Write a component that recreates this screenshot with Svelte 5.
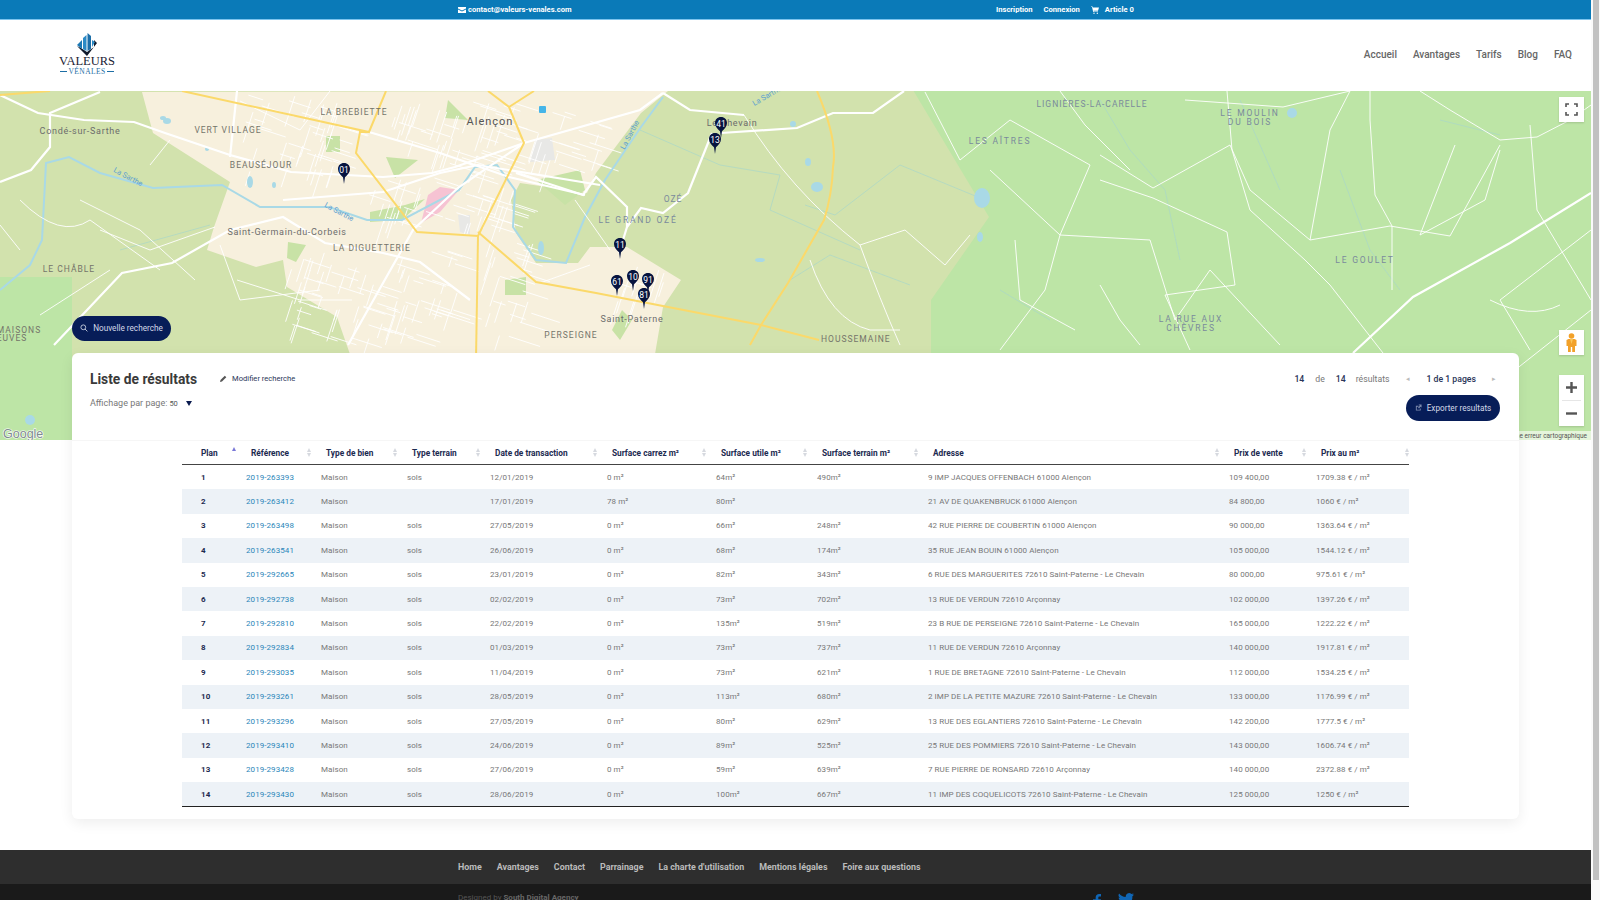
<script>
  const columns = [
    { label: 'Plan', width: 54, active: true },
    { label: 'Référence', width: 75 },
    { label: 'Type de bien', width: 86 },
    { label: 'Type terrain', width: 83 },
    { label: 'Date de transaction', width: 117 },
    { label: 'Surface carrez m²', width: 109 },
    { label: 'Surface utile m²', width: 101 },
    { label: 'Surface terrain m²', width: 111 },
    { label: 'Adresse', width: 301 },
    { label: 'Prix de vente', width: 87 },
    { label: 'Prix au m²', width: 103 }
  ];

  const rows = [
    ['1', '2019-263393', 'Maison', 'sols', '12/01/2019', '0 m²', '64m²', '490m²', '9 IMP JACQUES OFFENBACH 61000 Alençon', '109 400,00', '1709.38 € / m²'],
    ['2', '2019-263412', 'Maison', '', '17/01/2019', '78 m²', '80m²', '', '21 AV DE QUAKENBRUCK 61000 Alençon', '84 800,00', '1060 € / m²'],
    ['3', '2019-263498', 'Maison', 'sols', '27/05/2019', '0 m²', '66m²', '248m²', '42 RUE PIERRE DE COUBERTIN 61000 Alençon', '90 000,00', '1363.64 € / m²'],
    ['4', '2019-263541', 'Maison', 'sols', '26/06/2019', '0 m²', '68m²', '174m²', '35 RUE JEAN BOUIN 61000 Alençon', '105 000,00', '1544.12 € / m²'],
    ['5', '2019-292665', 'Maison', 'sols', '23/01/2019', '0 m²', '82m²', '343m²', '6 RUE DES MARGUERITES 72610 Saint-Paterne - Le Chevain', '80 000,00', '975.61 € / m²'],
    ['6', '2019-292738', 'Maison', 'sols', '02/02/2019', '0 m²', '73m²', '702m²', '13 RUE DE VERDUN 72610 Arçonnay', '102 000,00', '1397.26 € / m²'],
    ['7', '2019-292810', 'Maison', 'sols', '22/02/2019', '0 m²', '135m²', '519m²', '23 B RUE DE PERSEIGNE 72610 Saint-Paterne - Le Chevain', '165 000,00', '1222.22 € / m²'],
    ['8', '2019-292834', 'Maison', 'sols', '01/03/2019', '0 m²', '73m²', '737m²', '11 RUE DE VERDUN 72610 Arçonnay', '140 000,00', '1917.81 € / m²'],
    ['9', '2019-293035', 'Maison', 'sols', '11/04/2019', '0 m²', '73m²', '621m²', '1 RUE DE BRETAGNE 72610 Saint-Paterne - Le Chevain', '112 000,00', '1534.25 € / m²'],
    ['10', '2019-293261', 'Maison', 'sols', '28/05/2019', '0 m²', '113m²', '680m²', '2 IMP DE LA PETITE MAZURE 72610 Saint-Paterne - Le Chevain', '133 000,00', '1176.99 € / m²'],
    ['11', '2019-293296', 'Maison', 'sols', '27/05/2019', '0 m²', '80m²', '629m²', '13 RUE DES EGLANTIERS 72610 Saint-Paterne - Le Chevain', '142 200,00', '1777.5 € / m²'],
    ['12', '2019-293410', 'Maison', 'sols', '24/06/2019', '0 m²', '89m²', '525m²', '25 RUE DES POMMIERS 72610 Saint-Paterne - Le Chevain', '143 000,00', '1606.74 € / m²'],
    ['13', '2019-293428', 'Maison', 'sols', '27/06/2019', '0 m²', '59m²', '639m²', '7 RUE PIERRE DE RONSARD 72610 Arçonnay', '140 000,00', '2372.88 € / m²'],
    ['14', '2019-293430', 'Maison', 'sols', '28/06/2019', '0 m²', '100m²', '667m²', '11 IMP DES COQUELICOTS 72610 Saint-Paterne - Le Chevain', '125 000,00', '1250 € / m²']
  ];

  const navLinks = ['Accueil', 'Avantages', 'Tarifs', 'Blog', 'FAQ'];
  const footerLinks = ['Home', 'Avantages', 'Contact', 'Parrainage', "La charte d'utilisation", 'Mentions légales', 'Foire aux questions'];

  // map data is in page coordinates, the svg viewBox starts at y=91
  const yellowRoads = [
    'M182 91 L369 132 L386 91',
    'M0 95 L50 91',
    'M369 132 L360 132 L356 153 L417 232 L478 236 L524 143 L509 107 L488 91',
    'M509 107 L534 91',
    'M478 236 L476 360',
    'M478 232 L536 282 L596 293 L668 307 L761 325 L819 340',
    'M817 91 Q838 140 833 167 Q832 195 824 220 L788 283 L761 325 L750 345'
  ];

  const whiteRoads = [
    'M0 95 L38 113 L84 120 L134 122 L165 133 L230 155 L291 172 L383 177 L432 173 L455 167 L524 143',
    'M0 182 L31 170 L50 147 L50 113 L100 92',
    'M54 345 L122 273 L172 263 L230 230 L283 217 L325 243 L383 253 L420 262 L470 300',
    'M283 200 L383 192 L440 173 L478 165 L600 185',
    'M237 91 L230 157',
    'M348 345 L413 230 L459 187 L524 143 L640 110 L663 93',
    'M663 93 L690 110 L744 115 M721 133 L797 128 L833 113 L873 113 L904 91',
    'M712 133 L688 193 L663 213 L641 208 L627 227 L619 253',
    'M516 173 L583 195 L596 177 L627 207 L627 227',
    'M1591 193 L1510 243 L1413 297 L1353 353',
    'M369 132 L440 153 L509 177 L585 195'
  ];

  const thinRoads = [
    'M744 115 Q790 190 860 245 L905 230 L945 265 L970 235',
    'M860 245 Q880 300 900 345',
    'M925 92 L960 160 L1010 120 L1090 165 L1060 235 L1045 290 L1000 350',
    'M990 170 L1060 235 L1150 240 L1175 320 L1210 270 L1280 345',
    'M1227 91 L1232 150 L1250 210 L1305 260 L1330 285 L1383 353',
    'M1370 91 L1370 120 L1375 195 L1392 226 L1392 290',
    'M1100 155 L1153 188 L1230 145 L1250 190 L1310 240 L1390 226 L1450 236 L1500 145',
    'M1100 180 L1153 198 L1227 232 L1235 285 L1165 295 L1190 350',
    'M1420 91 L1450 110 L1500 140 L1537 137 L1570 120 L1591 105',
    'M1455 145 L1420 235 L1485 200 L1500 150',
    'M1530 125 L1537 210 L1591 300',
    'M1591 310 L1515 370 M1591 230 L1500 300 L1530 350',
    'M1490 300 Q1530 320 1560 305',
    'M20 200 Q60 240 90 220 L160 270 M80 200 L140 230 L195 280',
    'M100 230 L150 250 L215 227 M220 245 L240 300 L320 290',
    'M0 225 L20 250 M40 315 L110 270',
    'M237 280 L300 300 L352 300',
    'M810 260 Q830 320 870 330 L900 330',
    'M1060 91 L1085 125 L1130 170 M1350 91 L1330 130 L1310 240',
    'M240 101 L300 130 L330 91 M150 165 L170 140',
    'M540 283 L590 265 M575 200 L610 250',
    'M1015 240 L1020 300 L1075 330 M1100 285 L1120 320 L1140 345',
    'M1185 100 L1283 107 L1350 91'
  ];

  // the fine street mesh of the town is only texture, so it is generated
  const zones = [
    [250, 130, 340, 175], [240, 95, 350, 130], [395, 100, 520, 230], [290, 250, 460, 340],
    [490, 240, 535, 340], [535, 110, 600, 170], [610, 265, 665, 305], [350, 180, 410, 220]
  ];
  let seed = 7;
  const rnd = () => {
    seed = (seed * 16807) % 2147483647;
    return seed / 2147483647;
  };
  const streets = zones.flatMap(([x0, y0, x1, y1]) => {
    const count = Math.round(((x1 - x0) * (y1 - y0)) / 170);
    return Array.from({ length: count }, () => {
      const x = x0 + rnd() * (x1 - x0);
      const y = y0 + rnd() * (y1 - y0);
      const a = (rnd() > 0.5 ? 18 : 108) * (Math.PI / 180);
      const len = 10 + rnd() * 24;
      return `M${x.toFixed(1)} ${y.toFixed(1)} L${(x + Math.cos(a) * len).toFixed(1)} ${(y + Math.sin(a) * len).toFixed(1)}`;
    });
  });

  const river = 'M0 290 L30 265 L42 240 L46 163 L69 157 L100 173 L153 188 L222 185 L260 207 L329 207 L367 220 L402 220 L459 190 L475 167 L497 165 L515 190 L513 227 L536 260 L566 263 L585 217 L605 180 L641 127 L663 97';
  const streams = [
    'M640 130 L720 165 L780 175 L770 210 L860 250',
    'M805 205 L835 215 L900 165 L985 200',
    'M790 280 L830 255 L910 285',
    'M120 250 L210 225',
    'M1100 100 L1130 150 L1165 190 L1180 260',
    'M1440 120 L1500 135 M1340 170 L1370 250 L1400 290',
    'M1000 290 L1050 320',
    'M1240 100 L1280 190'
  ];

  const ponds = [
    [250, 182, 3, 6], [274, 185, 2, 3], [163, 118, 3, 2], [167, 121, 4, 3], [207, 149, 2, 2],
    [817, 187, 6, 5], [808, 162, 3, 4], [793, 124, 3, 3], [982, 198, 8, 10], [980, 237, 3, 5],
    [1292, 113, 5, 5], [760, 260, 5, 2], [541, 248, 3, 7], [30, 420, 5, 5]
  ];

  const labels = [
    { t: 'LA BREBIETTE', x: 354, y: 115 },
    { t: 'VERT VILLAGE', x: 228, y: 133 },
    { t: 'BEAUSÉJOUR', x: 261, y: 168 },
    { t: 'LA DIGUETTERIE', x: 372, y: 251 },
    { t: 'LE CHÂBLE', x: 69, y: 272 },
    { t: 'MAISONS', x: 19, y: 333 },
    { t: 'EUVES', x: 12, y: 341 },
    { t: 'PERSEIGNE', x: 571, y: 338 },
    { t: 'HOUSSEMAINE', x: 821, y: 342, start: true },
    { t: 'OZÉ', x: 673, y: 202, green: true },
    { t: 'LE GRAND OZÉ', x: 638, y: 223, green: true, wide: true },
    { t: 'LIGNIÈRES-LA-CARELLE', x: 1092, y: 107, green: true },
    { t: 'LES AÎTRES', x: 1000, y: 144, green: true, wide: true },
    { t: 'LE MOULIN', x: 1250, y: 116, green: true, wide: true },
    { t: 'DU BOIS', x: 1250, y: 125, green: true, wide: true },
    { t: 'LE GOULET', x: 1365, y: 263, green: true, wide: true },
    { t: 'LA RUE AUX', x: 1191, y: 322, green: true, wide: true },
    { t: 'CHÈVRES', x: 1191, y: 331, green: true, wide: true }
  ];

  const towns = [
    { t: 'Condé-sur-Sarthe', x: 80, y: 134 },
    { t: 'Saint-Germain-du-Corbeis', x: 287, y: 235 },
    { t: 'Saint-Paterne', x: 632, y: 322 },
    { t: 'Le Chevain', x: 732, y: 126 }
  ];

  const riverNames = [
    { t: 'La Sarthe', x: 127, y: 179, r: 28 },
    { t: 'La Sarthe', x: 338, y: 214, r: 28 },
    { t: 'La Sarthe', x: 632, y: 136, r: -62 },
    { t: 'La Sarthe', x: 768, y: 98, r: -30 }
  ];

  const pins = [
    { n: '01', x: 344, y: 163 },
    { n: '41', x: 721, y: 117 },
    { n: '13', x: 715, y: 133 },
    { n: '11', x: 620, y: 238 },
    { n: '61', x: 617, y: 275 },
    { n: '10', x: 633, y: 270 },
    { n: '91', x: 648, y: 273 },
    { n: '81', x: 644, y: 288 }
  ];
</script>

<div class="page">
  <div class="topbar">
    <div class="contact">
      <svg width="8" height="6" viewBox="0 0 8 6"><path d="M0 0h8v1.6L4 3.6 0 1.6z M0 2.5l4 2 4-2V6H0z" fill="#fff" /></svg>
      <span>contact@valeurs-venales.com</span>
    </div>
    <div class="account">
      <span>Inscription</span>
      <span>Connexion</span>
      <span class="cart">
        <svg width="8" height="8" viewBox="0 0 8 8"><path d="M0 .5h1.5l.4 1H8L7 4.8H2.6l.2.7H7v.6H2.2L1 1.1H0z" fill="#fff" /><circle cx="3" cy="7.2" r=".7" fill="#fff" /><circle cx="6.3" cy="7.2" r=".7" fill="#fff" /></svg>
        Article 0
      </span>
    </div>
  </div>

  <header>
    <div class="logo">
      <svg width="22" height="23" viewBox="0 0 22 23">
        <path d="M1 13 L11 23 L21 10 L18 7 L18 14 L11 19 L5 15z" fill="#101a2c" />
        <path d="M1 12 L6 7 L6 16z" fill="#1c78b4" />
        <path d="M7 5 L10.5 2 L10.5 18 L7 16z" fill="#2b8ac6" />
        <path d="M11.5 0 L15 3 L15 16 L11.5 18z" fill="#1c6ea8" />
        <path d="M16 7 L19 9 L16 14z" fill="#2b8ac6" />
      </svg>
      <div class="logo-name">VALEURS</div>
      <div class="logo-sub"><i></i><span>VÉNALES</span><i></i></div>
    </div>
    <nav>
      {#each navLinks as link}
        <span>{link}</span>
      {/each}
    </nav>
  </header>

  <section class="map">
    <svg class="map-art" viewBox="0 91 1591 349" width="1591" height="349">
      <rect x="0" y="90" width="1591" height="350" fill="#bde5a6" />
      <path d="M0 90 H913 L989 217 L931 300 L931 440 H72 V277 H0z" fill="#d2e2ad" />
      <path d="M142 92 L668 91 L641 113 L596 173 L587 193 L520 183 L511 200 L516 233 L536 263 L578 263 L590 247 L627 247 L681 280 L663 307 L654 360 L352 360 L337 317 L287 287 L283 260 L256 267 L207 250 L214 227 L230 182 L153 133z" fill="#f7f0dd" />
      <path d="M326 136 H340 V152 H326z M386 157 L418 160 L395 178z M370 212 L405 205 L425 199 L402 220 L370 222z M288 242 L306 245 L296 262 L287 258z M448 100 L468 120 L445 118z M505 280 L526 277 L526 295 L505 295z M536 180 L580 170 L585 190 L565 205z M622 310 L632 320 L620 340 L612 330z" fill="#c8e2a6" />
      <path d="M440 187 L459 190 L440 212 L421 223 L428 195z" fill="#f6c3d3" />
      <path d="M535 140 L552 138 L555 160 L530 162z M458 215 L470 215 L470 235 L460 232z" fill="#e8e8e6" />
      {#each streets as d}
        <path {d} class="street" />
      {/each}
      {#each streams as d}
        <path {d} class="stream" />
      {/each}
      <path d={river} class="river" />
      {#each ponds as [cx, cy, rx, ry]}
        <ellipse {cx} {cy} {rx} {ry} fill="#a9d9e6" />
      {/each}
      {#each thinRoads as d}
        <path {d} class="thin" />
      {/each}
      {#each whiteRoads as d}
        <path {d} class="white" />
      {/each}
      {#each yellowRoads as d}
        <path {d} class="yellow" />
      {/each}
      {#each riverNames as l}
        <text class="river-name" transform="translate({l.x} {l.y}) rotate({l.r})">{l.t}</text>
      {/each}
      {#each labels as l}
        <text class="place" class:green={l.green} class:wide={l.wide} text-anchor={l.start ? 'start' : 'middle'} x={l.x} y={l.y}>{l.t}</text>
      {/each}
      {#each towns as l}
        <text class="town" x={l.x} y={l.y}>{l.t}</text>
      {/each}
      <text class="city" x="490" y="125">Alençon</text>
      <rect x="539" y="106" width="7" height="7" rx="1" fill="#45b5e8" />
      {#each pins as p}
        <g transform="translate({p.x} {p.y})">
          <path d="M0 0 C3.6 0 6 2.6 6 6 C6 9.5 3.5 12 1 14.2 L0 21 L-1 14.2 C-3.5 12 -6 9.5 -6 6 C-6 2.6 -3.6 0 0 0z" fill="#07143f" />
          <text class="pin" y="9.5">{p.n}</text>
        </g>
      {/each}
      <text class="google" x="3" y="438">Google</text>
      <rect x="1505" y="431" width="86" height="9" fill="#fff" opacity="0.6" />
      <text class="attrib" x="1587" y="438">Signaler une erreur cartographique</text>
    </svg>

    <button class="btn search">
      <svg width="8" height="8" viewBox="0 0 8 8"><circle cx="3.3" cy="3.3" r="2.4" fill="none" stroke="#c8d0e0" stroke-width=".9" /><path d="M5 5l2.4 2.4" stroke="#c8d0e0" stroke-width=".9" /></svg>
      Nouvelle recherche
    </button>

    <div class="ctrl fullscreen">
      <svg width="13" height="13" viewBox="0 0 13 13"><path d="M1 4V1h3M9 1h3v3M12 9v3H9M4 12H1V9" fill="none" stroke="#555" stroke-width="1.6" /></svg>
    </div>
    <div class="ctrl pegman">
      <svg width="11" height="19" viewBox="0 0 11 19">
        <circle cx="5.5" cy="3" r="2.8" fill="#f2a12a" />
        <path d="M2.5 6h6l2 1v6H9V19H6.2v-5H4.8v5H2v-6H.5V7z" fill="#f2a12a" />
        <path d="M4 6h3l-1.5 5z" fill="#fcc75a" />
      </svg>
    </div>
    <div class="zoom-box">
      <div class="zoom-btn"><svg width="13" height="13" viewBox="0 0 13 13"><path d="M6.5 1v11M1 6.5h11" stroke="#555" stroke-width="2.4" /></svg></div>
      <i></i>
      <div class="zoom-btn"><svg width="13" height="13" viewBox="0 0 13 13"><path d="M1 6.5h11" stroke="#555" stroke-width="2.4" /></svg></div>
    </div>
  </section>

  <section class="card">
    <div class="card-head">
      <div class="head-left">
        <div class="title-row">
          <h2>Liste de résultats</h2>
          <span class="edit">
            <svg width="7" height="7" viewBox="0 0 7 7"><path d="M0 7l.5-2L4.8.7l1.5 1.5L2 6.5z" fill="#555" /></svg>
            Modifier recherche
          </span>
        </div>
        <div class="per-page">
          Affichage par page: <small>50</small>
          <svg width="6" height="5" viewBox="0 0 6 5"><path d="M0 0h6L3 5z" fill="#0a1b4f" /></svg>
        </div>
      </div>
      <div class="head-right">
        <div class="pager">
          <b>14</b><span class="de">de</span><b>14</b><span class="res">résultats</span>
          <em class="left">◂</em><strong>1 de 1 pages</strong><em>▸</em>
        </div>
        <button class="btn export">
          <svg width="7" height="7" viewBox="0 0 8 8"><path d="M1 2h3v1H2v3.5h3.5V5h1v2.5H1zM4 .6h3.5V4L6.400 3 4.500 5 3.500 4l2-2z" fill="#7f8cae" /></svg>
          Exporter resultats
        </button>
      </div>
    </div>

    <div class="table-wrap">
      <table>
        <colgroup>
          {#each columns as col}
            <col style="width:{col.width}px" />
          {/each}
        </colgroup>
        <thead>
          <tr>
            {#each columns as col}
              <th>
                {col.label}
                <span class="sort">
                  <i class="up" class:on={col.active}></i>
                  {#if !col.active}<i class="down"></i>{/if}
                </span>
              </th>
            {/each}
          </tr>
        </thead>
        <tbody>
          {#each rows as row}
            <tr>
              {#each row as cell, i}
                <td class:num={i === 0}>
                  {#if i === 1}<a href="#top">{cell}</a>{:else}{cell}{/if}
                </td>
              {/each}
            </tr>
          {/each}
        </tbody>
      </table>
    </div>
  </section>

  <footer>
    <div class="foot-menu">
      {#each footerLinks as link}
        <span>{link}</span>
      {/each}
    </div>
    <div class="foot-bottom">
      <span class="credit">Designed by <b>South Digital Agency</b></span>
      <div class="social">
        <svg width="8" height="16" viewBox="0 0 9 16"><path d="M3 16V9H0V6h3V4c0-2.600 1.600-4 3.900-4H9v3H7.500C6.300 3 6 3.600 6 4.500V6h3L8.500 9H6v7z" fill="#1066b5" /></svg>
        <svg width="16" height="13" viewBox="0 0 16 13"><path d="M16 1.600c-.6.300-1.200.4-1.900.5.700-.4 1.200-1 1.400-1.800-.6.400-1.300.7-2.100.8A3.300 3.300 0 0 0 7.800 4.100 9.300 9.300 0 0 1 1.100.6a3.300 3.300 0 0 0 1 4.400c-.5 0-1-.2-1.500-.4 0 1.600 1.100 2.900 2.600 3.200-.5.100-1 .2-1.500.1.400 1.300 1.600 2.200 3.100 2.300A6.600 6.600 0 0 1 0 11.500 9.300 9.300 0 0 0 14.400 3.300c.6-.5 1.200-1 1.600-1.700z" fill="#1066b5" /></svg>
      </div>
    </div>
  </footer>

  <div class="scrollbar"><div class="thumb"></div></div>
</div>

<style>
  :global(body) {
    margin: 0;
    background: #fff;
    overflow: hidden;
  }
  .page {
    width: 1600px;
    height: 900px;
    overflow: hidden;
    position: relative;
    font-family: Roboto, "Liberation Sans", sans-serif;
    padding-right: 9px;
    box-sizing: border-box;
  }
  .topbar {
    height: 19px;
    background: #0a7ab8;
    border-bottom: 1px solid #7cc4ee;
    color: #fff;
    font-size: 7.6px;
    font-weight: 700;
    display: flex;
    align-items: center;
    padding-left: 458px;
  }
  .contact {
    display: flex;
    align-items: center;
    gap: 2px;
    width: 538px;
  }
  .account {
    display: flex;
    align-items: center;
    gap: 11px;
  }
  .cart {
    display: flex;
    align-items: center;
    gap: 6px;
  }
  header {
    height: 71px;
    display: flex;
    justify-content: space-between;
    padding-left: 60px;
    padding-right: 19px;
  }
  .logo {
    width: 54px;
    padding-top: 13px;
    display: flex;
    flex-direction: column;
    align-items: center;
  }
  .logo-name {
    font-family: "Liberation Serif", serif;
    font-size: 12.5px;
    line-height: 11px;
    color: #1a2233;
  }
  .logo-sub {
    display: flex;
    align-items: center;
    gap: 2px;
    width: 100%;
    font-family: "Liberation Serif", serif;
    font-size: 7.5px;
    line-height: 9px;
    color: #1d6ea5;
    letter-spacing: .4px;
  }
  .logo-sub i {
    flex: 1;
    height: 1px;
    background: #1d6ea5;
  }
  nav {
    display: flex;
    gap: 16px;
    align-items: center;
    height: 68px;
    color: #666;
    font-size: 10px;
    font-weight: 500;
  }
  .map {
    height: 349px;
    position: relative;
  }
  .map-art {
    display: block;
    position: absolute;
    inset: 0;
  }
  .street { fill: none; stroke: #fff; stroke-width: .9; }
  .stream { fill: none; stroke: #a9d7c8; stroke-width: .7; }
  .river { fill: none; stroke: #a9d9e6; stroke-width: 2; }
  .thin { fill: none; stroke: #fff; stroke-width: .9; }
  .white { fill: none; stroke: #fff; stroke-width: 2.2; }
  .yellow { fill: none; stroke: #fbd96a; stroke-width: 2; }
  .place {
    font-size: 8.5px;
    letter-spacing: 1px;
    fill: #74746a;
  }
  .place.green { fill: #7a8a9c; }
  .place.wide { letter-spacing: 1.8px; }
  .town {
    font-size: 9px;
    letter-spacing: .7px;
    fill: #6c6c6c;
    text-anchor: middle;
  }
  .city {
    font-size: 11px;
    letter-spacing: 1px;
    fill: #555;
    text-anchor: middle;
  }
  .river-name {
    font-size: 7.5px;
    fill: #5c9fd0;
    text-anchor: middle;
  }
  .pin {
    font-size: 8.5px;
    fill: #fff;
    text-anchor: middle;
  }
  .google {
    font-family: "Liberation Sans", sans-serif;
    font-size: 12.5px;
    fill: #7d8a8e;
    stroke: #fff;
    stroke-width: 1.2;
    paint-order: stroke;
  }
  .attrib {
    font-size: 6.5px;
    fill: #555;
    text-anchor: end;
  }
  .btn {
    font-family: inherit;
    display: flex;
    align-items: center;
    gap: 5px;
    border: none;
    border-radius: 13px;
    background: #071d58;
    color: #d5dae8;
    font-size: 8.2px;
    height: 25.5px;
    padding: 0;
    justify-content: center;
  }
  .search {
    position: absolute;
    left: 72px;
    top: 224.5px;
    width: 99px;
  }
  .ctrl {
    position: absolute;
    left: 1559px;
    width: 25px;
    height: 25px;
    background: #fff;
    display: flex;
    align-items: center;
    justify-content: center;
    box-shadow: 0 1px 2px rgba(0, 0, 0, .15);
  }
  .fullscreen { top: 6px; }
  .pegman { top: 239px; }
  .zoom-box {
    position: absolute;
    left: 1559px;
    top: 284px;
    width: 25px;
    height: 51px;
    background: #fff;
    box-shadow: 0 1px 2px rgba(0, 0, 0, .15);
  }
  .zoom-box i {
    display: block;
    height: 1px;
    margin: 0 3px;
    background: #e6e6e6;
  }
  .zoom-btn {
    height: 25px;
    display: flex;
    align-items: center;
    justify-content: center;
  }
  .card {
    position: relative;
    margin: -87px 0 0 72px;
    width: 1447px;
    height: 466px;
    background: #fff;
    border-radius: 6px;
    box-shadow: 0 4px 14px rgba(0, 0, 0, .07);
  }
  .card-head {
    height: 87px;
    box-sizing: border-box;
    padding: 0 19px 0 18px;
    display: flex;
    justify-content: space-between;
  }
  .title-row {
    display: flex;
    align-items: center;
    gap: 23px;
    margin-top: 16.5px;
    height: 18px;
  }
  h2 {
    margin: 0;
    font-size: 13.8px;
    font-weight: 700;
    color: #3a3a3a;
  }
  .edit {
    display: flex;
    align-items: center;
    gap: 5px;
    color: #2a3558;
    font-size: 7.6px;
  }
  .per-page {
    display: flex;
    align-items: center;
    gap: 2px;
    margin-top: 10.5px;
    font-size: 9px;
    color: #777;
  }
  .per-page small {
    font-size: 7.5px;
    color: #555;
    margin-right: 6px;
  }
  .head-right {
    display: flex;
    flex-direction: column;
    align-items: flex-end;
  }
  .pager {
    display: flex;
    align-items: center;
    height: 18px;
    margin-top: 17px;
    padding-right: 4px;
    font-size: 8.7px;
    color: #777;
  }
  .pager b {
    font-weight: 500;
    color: #2a3558;
  }
  .de { margin: 0 11px; }
  .res { margin-left: 10px; }
  .pager em {
    font-style: normal;
    font-size: 7px;
    color: #bbb;
  }
  .pager em.left { margin-left: 17px; }
  .pager strong {
    font-weight: 500;
    color: #2a3558;
    margin: 0 16px;
  }
  .export {
    width: 94px;
    margin-top: 7px;
  }
  .table-wrap {
    padding-left: 110px;
    border-top: 1px solid #f6f6f6;
  }
  table {
    border-collapse: collapse;
    table-layout: fixed;
    width: 1227px;
    border-bottom: 1px solid #222;
  }
  th {
    position: relative;
    height: 23px;
    padding: 0 0 0 15px;
    text-align: left;
    font-size: 8.3px;
    font-weight: 700;
    color: #1c2a50;
    border-bottom: 1px solid #444;
    white-space: nowrap;
  }
  th:first-child, td:first-child { padding-left: 19px; }
  .sort {
    position: absolute;
    right: 0;
    top: 7px;
    display: flex;
    flex-direction: column;
    gap: 1px;
  }
  .sort i {
    display: block;
    width: 0;
    height: 0;
    border-left: 2.5px solid transparent;
    border-right: 2.5px solid transparent;
  }
  .sort .up { border-bottom: 4px solid #d6d9df; }
  .sort .down { border-top: 4px solid #d6d9df; }
  .sort .up.on { border-bottom-color: #7a78d8; margin-top: -1px; }
  td {
    height: 24.4px;
    padding: 0 0 0 10px;
    font-size: 8px;
    letter-spacing: .07px;
    color: #777;
    white-space: nowrap;
  }
  tbody tr:nth-child(even) td { background: #edf2f7; }
  td.num {
    font-weight: 700;
    color: #1c2a50;
  }
  td a {
    color: #2b86ba;
    text-decoration: none;
  }
  footer {
    margin-top: 31px;
  }
  .foot-menu {
    height: 34px;
    background: #2e2e2e;
    display: flex;
    align-items: center;
    gap: 15px;
    padding-left: 458px;
    color: #bbb;
    font-size: 8.9px;
    font-weight: 700;
  }
  .foot-bottom {
    height: 40px;
    background: #1a1a1a;
    padding-left: 458px;
    padding-top: 9px;
    display: flex;
    box-sizing: border-box;
    color: #555;
    font-size: 8px;
  }
  .credit { width: 635px; }
  .credit b { color: #666; }
  .social {
    display: flex;
    gap: 17px;
    align-items: flex-start;
  }
  .scrollbar {
    position: absolute;
    top: 0;
    right: 0;
    width: 9px;
    height: 900px;
    background: #fafafa;
  }
  .thumb {
    margin: 0 1px 0 2px;
    height: 880px;
    background: #c1c1c1;
  }
</style>
